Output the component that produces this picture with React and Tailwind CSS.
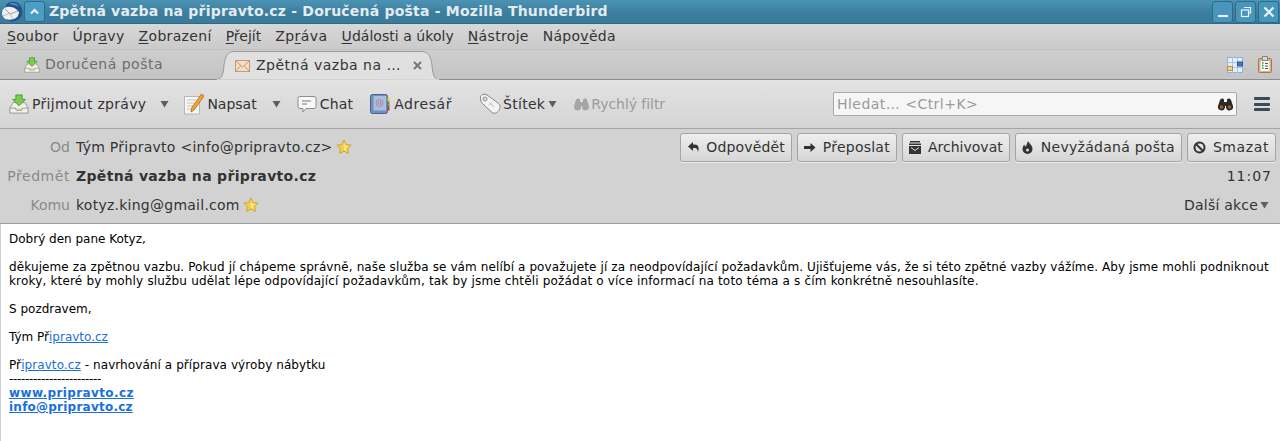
import React from "react";

function U({ pre, u, post, t }) {
  return <span className={t}>{pre}<span className="underline underline-offset-2">{u}</span>{post}</span>;
}

function Star() {
  return (
    <svg width="16" height="16" viewBox="0 0 16 16" className="shrink-0">
      <path d="M8 1l2.200 4.500 5 .7-3.600 3.400.9 4.900L8 12.200l-4.500 2.300.9-4.900L.8 6.200l5-.7z" fill="#f5cf45" stroke="#d0a63e" strokeWidth="1" />
      <path d="M8 3.500l1.300 3 3 .4-2.200 2 .5 2.800L8 10.400z" fill="#fbe98c" />
    </svg>
  );
}

function Caret({ className = "" }) {
  return (
    <svg width="9" height="8" viewBox="0 0 9 8" className={className}>
      <path d="M0.500 1h8L4.500 7.500z" fill="#5f5f5f" />
    </svg>
  );
}

function InboxIcon({ size = 22 }) {
  return (
    <svg width={size} height={size} viewBox="0 0 22 22" className="shrink-0">
      <path d="M4.500 9.500h13l3.500 6v5.500H1v-5.500z" fill="#f1f0ea" stroke="#93938a" />
      <path d="M1 15.500h6l1 2.500h6l1-2.500h6" fill="#dcdbd3" stroke="#93938a" />
      <path d="M7.500 1h7v5h3.500l-7 7-7-7h3.500z" fill="#7ccb4c" stroke="#4a9a2c" />
    </svg>
  );
}

function HeaderButton({ icon, label, t = "" }) {
  return (
    <div className="flex h-[29px] items-center gap-[6px] rounded-[3px] border border-[#a4a4a4] bg-gradient-to-b from-[#eeeeee] to-[#d6d6d6] pl-[5px] pr-[6px] text-[14px] text-[#333333] shadow-[0_1px_0_#ededed]">
      <span className="flex w-[14px] justify-center">{icon}</span>
      <span className={`whitespace-nowrap ${t}`}>{label}</span>
    </div>
  );
}

const linkCls = "text-[#1a6fdc] underline";

export default function App() {
  return (
    <div className="flex h-[441px] w-[1280px] flex-col overflow-hidden bg-white font-['DejaVu_Sans',sans-serif]">
      {/* Title bar */}
      <div className="flex h-[24px] items-center border-b border-[#2f6a87] bg-gradient-to-b from-[#4b93b5] via-[#3d7f9f] to-[#3a7a99] pl-[1px]">
        <svg width="22" height="22" viewBox="0 0 22 22" className="shrink-0">
          <path d="M5 4C8 0 15-.5 19 4c3 4 3 10 0 13-3 3.500-9 4.500-13 2z" fill="#24528f" />
          <path d="M8 3c4-2 8-.5 10 3-3-2-6-2.500-10-3z" fill="#5b94cf" />
          <path d="M1 12c0-3 2-5.500 5-6 3-.5 6 0 9 2l3 3c0 3-2 6-5 7-4 1-8 1-10-1-1-1-2-3-2-5z" fill="#eef0f2" />
          <path d="M4 8l5 5 8-3" fill="none" stroke="#9aa3ae" strokeWidth="1" />
          <path d="M2 15l6-2.500M9 13l3 5" fill="none" stroke="#b9bfc7" strokeWidth="1" />
        </svg>
        <div className="ml-[1px] flex h-[21px] w-[21px] items-center justify-center rounded-[3px] border border-[#2f6a87] bg-[#4b9dc4]">
          <svg width="11" height="7" viewBox="0 0 11 7"><path d="M2 5.500L5.500 2 9 5.500" fill="none" stroke="#eef5f8" strokeWidth="2" /></svg>
        </div>
        <span className="ml-[4px] whitespace-nowrap text-[14px] font-bold tracking-[0.21px] text-[#e3ecf0]">Zpětná vazba na připravto.cz - Doručená pošta - Mozilla Thunderbird</span>
        <div className="ml-auto flex gap-[2px] pr-[1px]">
          <div className="flex h-[22px] w-[21px] items-center justify-center rounded-[3px] border border-[#2f6a87] bg-[#4896bb]">
            <svg width="12" height="12" viewBox="0 0 12 12"><path d="M1 10h10" stroke="#eef5f8" strokeWidth="2" /></svg>
          </div>
          <div className="flex h-[22px] w-[21px] items-center justify-center rounded-[3px] border border-[#2f6a87] bg-[#4896bb]">
            <svg width="12" height="12" viewBox="0 0 12 12" fill="none" stroke="#eef5f8" strokeWidth="1.200"><path d="M4 1.500h6.500V7H8.500" /><rect x="1.500" y="4" width="7" height="6.500" /></svg>
          </div>
          <div className="flex h-[22px] w-[21px] items-center justify-center rounded-[3px] border border-[#2f6a87] bg-[#4896bb]">
            <svg width="12" height="12" viewBox="0 0 12 12"><path d="M1.500 1.500l9 9M10.500 1.500l-9 9" stroke="#eef5f8" strokeWidth="2.200" /></svg>
          </div>
        </div>
      </div>

      {/* Menu */}
      <div className="flex h-[26px] items-center gap-[14px] border-b border-[#c0c0c0] bg-gradient-to-b from-[#d8d8d8] to-[#cacaca] pl-[7px] text-[14px] text-[#333333]">
        <U u="S" post="oubor" t="tracking-[0.33px]" />
        <U pre="Úpr" u="a" post="vy" t="tracking-[0.33px]" />
        <U u="Z" post="obrazení" t="tracking-[0.33px]" />
        <U u="P" post="řejít" />
        <U pre="Zp" u="r" post="áva" t="tracking-[0.45px]" />
        <U u="U" post="dálosti a úkoly" t="tracking-[0.04px]" />
        <U u="N" post="ástroje" t="tracking-[0.33px]" />
        <U pre="Nápo" u="v" post="ěda" t="tracking-[0.25px]" />
      </div>

      {/* Tabs */}
      <div className="flex h-[30px] items-end border-b border-[#8d8d8d] bg-gradient-to-b from-[#cecece] to-[#c4c4c4]">
        <div className="flex h-[29px] w-[216px] items-center pl-[24px] text-[14px] text-[#6e6e6e]">
          <InboxIcon size={16} />
          <span className="ml-[5px] tracking-[0.5px]">Doručená pošta</span>
        </div>
        <div className="relative z-10 -mb-px flex h-[29px] w-[224px] items-center pl-[19px] text-[14px] text-[#333333]">
          <svg width="224" height="29" viewBox="0 0 224 29" className="absolute inset-0">
            <path d="M0 28.500C5 28 6.500 26 7.500 19 8.500 8 10 .5 18 .5H206c8 0 9.500 8 10.500 18.500 1 7 2.500 9.500 7.500 10z" fill="#e0e0e0" stroke="#9a9a9a" />
            <path d="M1 29h222" stroke="#e0e0e0" strokeWidth="1.500" />
          </svg>
          <svg width="15" height="12" viewBox="0 0 15 12" className="relative shrink-0">
            <rect x="0.500" y="0.500" width="14" height="11" fill="#f3ddc6" stroke="#c49a76" />
            <path d="M1 1l6.500 6 6.500-6M1 11l4.500-5M14 11l-4.500-5" fill="none" stroke="#c49a76" />
          </svg>
          <span className="relative ml-[6px] whitespace-nowrap tracking-[0.5px]">Zpětná vazba na …</span>
          <svg width="9" height="9" viewBox="0 0 9 9" className="relative ml-[12px]"><path d="M1 1l7 7M8 1L1 8" stroke="#777777" strokeWidth="2" /></svg>
        </div>
        <div className="ml-auto flex h-[29px] items-center gap-[15px] pr-[8px]">
          <svg width="16" height="16" viewBox="0 0 16 16">
            <rect x="0.500" y="0.500" width="15" height="15" fill="#e6eefa" stroke="#8fb0de" />
            <path d="M0 5.500h16M0 10.500h16M5.500 0v16M10.500 0v16" stroke="#a9c2e6" />
            <rect x="0.500" y="9.500" width="5" height="4" fill="#f3d48f" stroke="#b5924a" />
            <rect x="10.500" y="5" width="5" height="4" fill="#3f78c9" stroke="#2a5a9e" />
          </svg>
          <svg width="14" height="17" viewBox="0 0 14 17">
            <rect x="0.500" y="2.500" width="13" height="14" rx="1" fill="#d9b184" stroke="#a67a4a" />
            <rect x="2.500" y="5" width="9" height="10" fill="#fafafa" />
            <rect x="4.500" y="0.500" width="5" height="4" fill="#d8d8d8" stroke="#888888" />
            <path d="M4 7h1.500M4 9.500h1.500M4 12h1.500" stroke="#1f9a35" strokeWidth="1.400" />
            <path d="M7 7.500h3M7 10h3M7 12.500h3" stroke="#555555" />
          </svg>
        </div>
      </div>

      {/* Toolbar */}
      <div className="flex h-[49px] items-center border-b border-[#a5a5a5] bg-gradient-to-b from-[#e2e2e2] to-[#d5d5d5] text-[14px] text-[#333333]">
        <div className="ml-[9px] flex items-center">
          <InboxIcon size={20} />
          <span className="ml-[3px] whitespace-nowrap tracking-[0.3px]">Přijmout zprávy</span>
          <Caret className="ml-[14px]" />
        </div>
        <div className="ml-[15px] flex items-center">
          <svg width="20" height="22" viewBox="0 0 20 22" className="shrink-0">
            <rect x="0.500" y="3.500" width="15" height="17.500" fill="#f6f6f4" stroke="#b8b8b8" />
            <path d="M3 7h9M3 10h8M3 13h6M3 16h5" stroke="#c4c4c4" />
            <path d="M17.500 1L20 3 10.500 16.500 7 19l.8-4.200z" fill="#f2a534" stroke="#b9782a" />
          </svg>
          <span className="ml-[3px]">Napsat</span>
          <Caret className="ml-[15px]" />
        </div>
        <div className="ml-[16px] flex items-center">
          <svg width="20" height="20" viewBox="0 0 20 20" className="shrink-0">
            <path d="M3 2.500h14a2 2 0 0 1 2 2v8a2 2 0 0 1-2 2H9l-3 3.500v-3.500H3a2 2 0 0 1-2-2v-8a2 2 0 0 1 2-2z" fill="#f8f8f8" stroke="#8e8e8e" />
            <path d="M5 7h9M5 10h5" stroke="#777777" />
          </svg>
          <span className="ml-[3px] tracking-[0.2px]">Chat</span>
        </div>
        <div className="ml-[17px] flex items-center">
          <svg width="20" height="20" viewBox="0 0 20 20" className="shrink-0">
            <rect x="0.500" y="0.500" width="17" height="19" rx="2" fill="#6f8fbe" stroke="#46648f" />
            <rect x="3.500" y="2" width="12.500" height="14.500" fill="#a9bfe0" />
            <circle cx="9.500" cy="9" r="3.500" fill="none" stroke="#bd7fa3" />
            <circle cx="9.500" cy="9" r="1.400" fill="none" stroke="#bd7fa3" />
            <rect x="17.500" y="3" width="2" height="4.500" fill="#e5cf3a" />
            <rect x="17.500" y="7.500" width="2" height="4" fill="#4fa34f" />
            <rect x="17.500" y="11.500" width="2" height="5" fill="#c9423a" />
          </svg>
          <span className="ml-[4px] tracking-[0.55px]">Adresář</span>
        </div>
        <div className="ml-[27px] flex items-center">
          <svg width="22" height="22" viewBox="0 0 22 22" className="shrink-0">
            <path d="M1.500 4c.5-2.500 4-3.500 6.500-2l11 8c2.500 2 2.500 5 .8 7.500S15.500 21 13 19.500L3.500 10.500C2 9 1 6.500 1.500 4z" fill="#f4f4f2" stroke="#868686" />
            <circle cx="6" cy="6" r="2" fill="#e2e2e2" stroke="#8a8a8a" />
            <path d="M10 9.500l5 4M12.500 9.500l-2.500 3" stroke="#bdbdbd" />
          </svg>
          <span className="ml-[2px] tracking-[0.3px]">Štítek</span>
          <Caret className="ml-[3px]" />
        </div>
        <div className="ml-[16px] flex items-center text-[#9b9b9b]">
          <svg width="17" height="13" viewBox="0 0 17 13" className="shrink-0">
            <path d="M1 8l2-6c1-2 3-2 4-.5V4h3V1.500c1-1.500 3-1.500 4 .5l2 6a3.500 3.500 0 0 1-7 1.500V8H8v1.500A3.500 3.500 0 0 1 1 8z" fill="#a5a5a5" />
          </svg>
          <span className="ml-[1px] tracking-[-0.05px]">Rychlý filtr</span>
        </div>
        <div className="ml-auto flex h-[24px] w-[404px] items-center rounded-[2px] border border-[#a8a8a8] bg-[#f6f6f6] pl-[3px] pr-[2px] text-[#9a9a9a]">
          <span className="tracking-[0.47px]">Hledat… &lt;Ctrl+K&gt;</span>
          <svg width="17" height="13" viewBox="0 0 17 13" className="ml-auto shrink-0">
            <path d="M1 8l2-6c1-2 3-2 4-.5V4h3V1.500c1-1.500 3-1.500 4 .5l2 6a3.500 3.500 0 0 1-7 1.500V8H8v1.500A3.500 3.500 0 0 1 1 8z" fill="#2a2a2a" />
            <circle cx="4.500" cy="9" r="1.800" fill="#9a5a2a" />
            <circle cx="12.500" cy="9" r="1.800" fill="#9a5a2a" />
          </svg>
        </div>
        <div className="ml-[17px] mr-[10px] flex h-[14px] w-[16px] flex-col justify-between">
          <span className="h-[3px] rounded-[1px] bg-[#3a4a56]" />
          <span className="h-[3px] rounded-[1px] bg-[#3a4a56]" />
          <span className="h-[3px] rounded-[1px] bg-[#3a4a56]" />
        </div>
      </div>

      {/* Header */}
      <div className="flex h-[95px] flex-col border-b border-[#9e9e9e] bg-[#d2d2d2] pr-[4px] text-[14px] text-[#333333]">
        <div className="flex h-[33px] items-center pt-[3px]">
          <span className="w-[70px] shrink-0 text-right text-[#8a8a8a]">Od</span>
          <span className="ml-[6px] whitespace-nowrap tracking-[0.27px]">Tým Připravto &lt;info@pripravto.cz&gt;</span>
          <span className="ml-[3px]"><Star /></span>
          <div className="ml-auto flex gap-[5px]">
            <HeaderButton label="Odpovědět" t="tracking-[0.14px]" icon={
              <svg width="13" height="12" viewBox="0 0 13 12"><path d="M6 1L1 5.500 6 10V7h2c1.500 0 2.500 1 3 4 1.500-4 .5-7.500-3.500-7.500H6z" fill="#333333" /></svg>} />
            <HeaderButton label="Přeposlat" t="tracking-[0.23px]" icon={
              <svg width="13" height="11" viewBox="0 0 13 11"><path d="M1 4h6.500V1l5 4.500-5 4.500V7H1z" fill="#333333" /></svg>} />
            <HeaderButton label="Archivovat" t="tracking-[0.02px]" icon={
              <svg width="14" height="13" viewBox="0 0 14 13"><path d="M2 0h10v1.500H2zM1 2.500h12V4H1z" fill="#333333" /><path d="M1 5h12v8H1z" fill="#333333" /><path d="M3 6.500l4 3 4-3" stroke="#dddddd" fill="none" /></svg>} />
            <HeaderButton label="Nevyžádaná pošta" t="tracking-[0.27px]" icon={
              <svg width="11" height="13" viewBox="0 0 11 13"><path d="M6 0c.5 2 4.500 4 4.500 8A5 5 0 0 1 .5 8c0-2 1-3.500 2-4.500 0 1 .5 2 1 2C4.500 5 5 2 6 0z" fill="#333333" /><circle cx="5.500" cy="9" r="1.500" fill="#dddddd" /></svg>} />
            <HeaderButton label="Smazat" t="tracking-[0.6px]" icon={
              <svg width="13" height="13" viewBox="0 0 13 13" fill="none" stroke="#333333" strokeWidth="2"><circle cx="6.500" cy="6.500" r="5" /><path d="M3 3l7 7" /></svg>} />
          </div>
        </div>
        <div className="flex h-[28px] items-center">
          <span className="w-[70px] shrink-0 whitespace-nowrap text-right tracking-[0.55px] text-[#8a8a8a]">Předmět</span>
          <span className="ml-[6px] font-bold tracking-[0.32px]">Zpětná vazba na připravto.cz</span>
          <span className="ml-auto pr-[4px] tracking-[1px]">11:07</span>
        </div>
        <div className="flex h-[30px] items-center">
          <span className="w-[70px] shrink-0 text-right text-[#8a8a8a]">Komu</span>
          <span className="ml-[6px] tracking-[0.25px]">kotyz.king@gmail.com</span>
          <span className="ml-[3px]"><Star /></span>
          <span className="ml-auto flex items-center whitespace-nowrap pr-[7px] tracking-[0.2px]">Další akce<Caret className="ml-[2px]" /></span>
        </div>
      </div>

      {/* Body */}
      <div className="flex-1 border-l border-[#cfcfcf] pl-[8px] pr-[8px] pt-[8px] text-[12px] leading-[14px] text-black">
        <p>Dobrý den pane Kotyz,</p>
        <p className="mt-[14px]">
          <span className="block whitespace-nowrap tracking-[0.11px]">děkujeme za zpětnou vazbu. Pokud jí chápeme správně, naše služba se vám nelíbí a považujete jí za neodpovídající požadavkům. Ujišťujeme vás, že si této zpětné vazby vážíme. Aby jsme mohli podniknout</span>
          <span className="block whitespace-nowrap tracking-[0.175px]">kroky, které by mohly službu udělat lépe odpovídající požadavkům, tak by jsme chtěli požádat o více informací na toto téma a s čím konkrétně nesouhlasíte.</span>
        </p>
        <p className="mt-[14px]">S pozdravem,</p>
        <p className="mt-[14px]">Tým Př<a className={linkCls}>ipravto.cz</a></p>
        <p className="mt-[14px] tracking-[0.08px]">Př<a className={linkCls}>ipravto.cz</a> - navrhování a příprava výroby nábytku</p>
        <p className="tracking-[-0.33px]">-----------------------</p>
        <p className="font-bold tracking-[0.375px]"><a className={linkCls}>www.pripravto.cz</a></p>
        <p className="font-bold tracking-[0.235px]"><a className={linkCls}>info@pripravto.cz</a></p>
      </div>
    </div>
  );
}
